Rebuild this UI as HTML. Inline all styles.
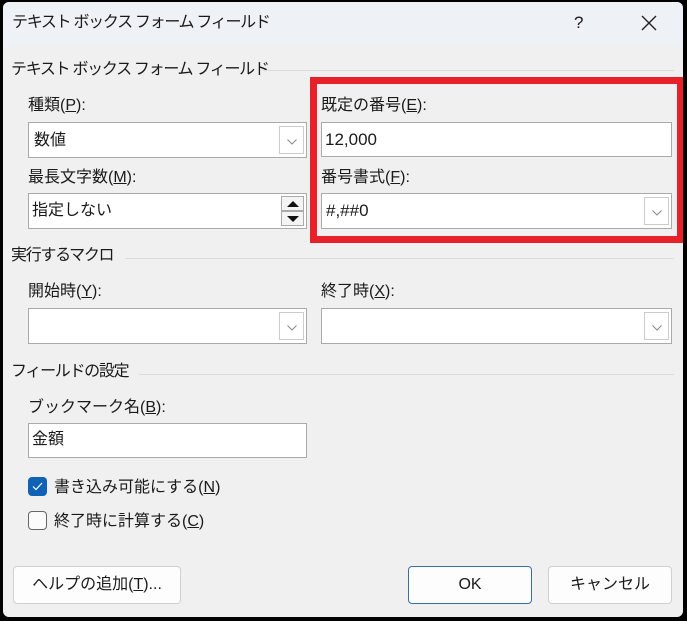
<!DOCTYPE html>
<html><head><meta charset="utf-8"><style>
*{box-sizing:border-box;margin:0;padding:0}
body{width:687px;height:621px;background:#000;position:relative;overflow:hidden;font-family:"Liberation Sans","Noto Sans CJK JP",sans-serif;font-size:16px;color:#1a1a1a}
#d{position:absolute;left:3px;top:2px;width:680px;height:615px;background:#f0f0f0;border-radius:6px;overflow:hidden}
#t{position:absolute;left:0;top:0;width:100%;height:44px;background:#eef1f5}
.a{position:absolute;white-space:nowrap;line-height:20px}
.n{letter-spacing:-1.3px}
.sec{position:absolute;height:1px;background:#dcdcdc}
.box{position:absolute;background:#fff;border:1px solid #aaa}
.dd{position:absolute;right:2px;top:3px;bottom:3px;width:25px;border:1px solid #ccc;background:#fff}
.dd svg{position:absolute;left:7px;top:12px}
.btn{position:absolute;background:#fdfdfd;border:1px solid #d0d0d0;border-radius:4px;text-align:center;line-height:36px}
u{text-decoration:underline}
</style></head><body>
<div id="d">
<div id="t"></div>
<div class="a n" style="left:9px;top:11px">テキスト ボックス フォーム フィールド</div>
<div class="a" style="left:571px;top:11px;font-size:17px">?</div>
<svg style="position:absolute;left:638px;top:13px" width="16" height="16"><path d="M1 1L15 15M15 1L1 15" stroke="#222" stroke-width="1.4"/></svg>

<div class="a n" style="left:8px;top:58px">テキスト ボックス フォーム フィールド</div>
<div class="sec" style="left:260px;top:68px;width:411px"></div>

<div class="a" style="left:25px;top:94px">種類(<u>P</u>):</div>
<div class="box" style="left:25px;top:120px;width:279px;height:36px"><div class="a" style="left:5px;top:8px">数値</div><div class="dd"><svg width="10" height="6"><path d="M0.5 0.5L5 5L9.5 0.5" fill="none" stroke="#888"/></svg></div></div>
<div class="a" style="left:25px;top:166px">最長文字数(<u>M</u>):</div>
<div class="box" style="left:25px;top:191px;width:279px;height:36px"><div class="a" style="left:3px;top:7px">指定しない</div>
<div style="position:absolute;right:2px;top:2px;width:23px;height:15px;border:1px solid #aaa;background:#f4f4f4"><svg style="position:absolute;left:5px;top:4px" width="12" height="6"><path d="M0 6L6 0L12 6Z" fill="#111"/></svg></div>
<div style="position:absolute;right:2px;top:17px;width:23px;height:15px;border:1px solid #aaa;background:#f4f4f4"><svg style="position:absolute;left:5px;top:4px" width="12" height="6"><path d="M0 0L6 6L12 0Z" fill="#111"/></svg></div></div>

<div class="a" style="left:318px;top:94px">既定の番号(<u>E</u>):</div>
<div class="box" style="left:318px;top:120px;width:351px;height:35px"><div class="a" style="left:3px;top:7px;font-size:17px">12,000</div></div>
<div class="a" style="left:318px;top:166px">番号書式(<u>F</u>):</div>
<div class="box" style="left:318px;top:191px;width:351px;height:36px"><div class="a" style="left:4px;top:7px;font-size:17px">#,##0</div><div class="dd"><svg width="10" height="6"><path d="M0.5 0.5L5 5L9.5 0.5" fill="none" stroke="#888"/></svg></div></div>
<div style="position:absolute;left:307px;top:75px;width:374px;height:166px;border:7px solid #e8202a"></div>

<div class="a n" style="left:8px;top:244px">実行するマクロ</div>
<div class="sec" style="left:122px;top:256px;width:549px"></div>
<div class="a" style="left:25px;top:280px">開始時(<u>Y</u>):</div>
<div class="box" style="left:25px;top:306px;width:279px;height:36px"><div class="dd"><svg width="10" height="6"><path d="M0.5 0.5L5 5L9.5 0.5" fill="none" stroke="#888"/></svg></div></div>
<div class="a" style="left:318px;top:280px">終了時(<u>X</u>):</div>
<div class="box" style="left:318px;top:306px;width:351px;height:36px"><div class="dd"><svg width="10" height="6"><path d="M0.5 0.5L5 5L9.5 0.5" fill="none" stroke="#888"/></svg></div></div>

<div class="a n" style="left:8px;top:360px">フィールドの設定</div>
<div class="sec" style="left:136px;top:372px;width:535px"></div>
<div class="a" style="left:25px;top:396px">ブックマーク名(<u>B</u>):</div>
<div class="box" style="left:25px;top:421px;width:279px;height:35px"><div class="a" style="left:3px;top:6px">金額</div></div>

<div style="position:absolute;left:25px;top:475px;width:19px;height:19px;border-radius:4px;background:#0f62b5"><svg style="position:absolute;left:4px;top:5px" width="11" height="9"><path d="M1 4.5L4 7.5L10 1" fill="none" stroke="#fff" stroke-width="1.2"/></svg></div>
<div class="a" style="left:51px;top:476px">書き込み可能にする(<u>N</u>)</div>
<div style="position:absolute;left:25px;top:509px;width:19px;height:19px;border-radius:4px;border:1px solid #666;background:#fbfbfb"></div>
<div class="a" style="left:51px;top:510px">終了時に計算する(<u>C</u>)</div>

<div class="btn" style="left:10px;top:564px;width:168px;height:38px">ヘルプの追加(<u>T</u>)...</div>
<div class="btn" style="left:405px;top:564px;width:124px;height:38px;border:1px solid #3a6ea5">OK</div>
<div class="btn" style="left:545px;top:564px;width:124px;height:38px">キャンセル</div>
</div>
</body></html>
